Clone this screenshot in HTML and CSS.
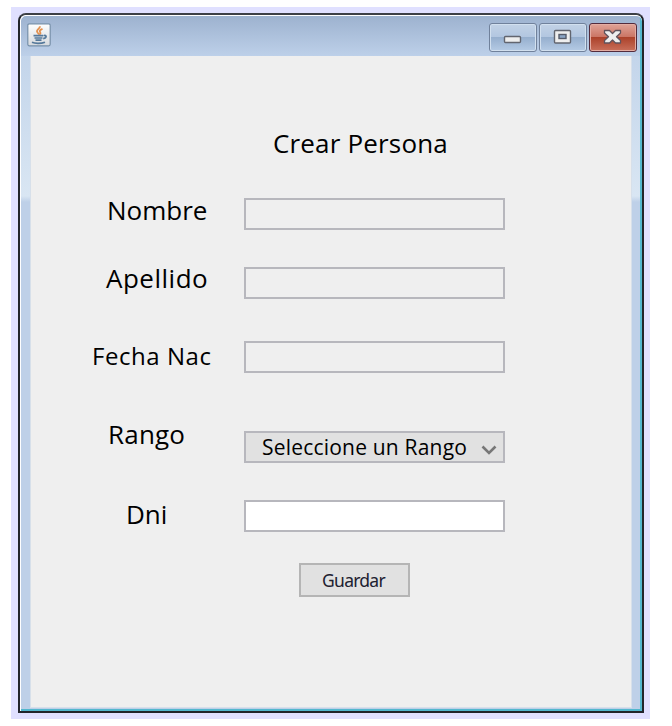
FILE: index.html
```
<!DOCTYPE html>
<html lang="es">
<head>
<meta charset="utf-8">
<title>Crear Persona</title>
<link rel="stylesheet" href="styles.css">
</head>
<body>
<div class="backdrop">
  <div class="window">
    <div class="frame">
      <header class="titlebar">
        <svg class="app-icon" width="24" height="24" viewBox="0 0 24 24">
          <defs>
            <linearGradient id="tile" x1="0" y1="0" x2="0" y2="1"><stop offset="0" stop-color="#fff"/><stop offset="1" stop-color="#d5d9dd"/></linearGradient>
          </defs>
          <rect x=".8" y=".8" width="22.4" height="22" rx="1.5" fill="url(#tile)" stroke="#7690aa" stroke-width="1.2"/>
          <path d="M12.8 3.2c.8 2.3-4.2 3.3-2.5 5.9.5 1 1.5 1.7 1.6 2.5M15.5 5.800c-2.8 1.2-3.3 2.2-2.2 3.5.6.8-.1 1.7-.8 2.3" fill="none" stroke="#e3914f" stroke-width="1.8"/>
          <path d="M6.500 12.700h9.500M7.500 15h8M8.500 17.200h6M16.500 12.700c3.500-1.300 3.500 2.200-.3 3M5 19.300c3 1.400 9 1.400 13-.1" fill="none" stroke="#55799b" stroke-width="1.7"/>
        </svg>
        <div class="controls">
          <span class="control">
            <svg width="48" height="29" viewBox="0 0 48 29"><rect x="15.500" y="13.500" width="16" height="6" rx="1" fill="#eee" stroke="#62656f" stroke-width="1.400"/></svg>
          </span>
          <span class="control">
            <svg width="48" height="29" viewBox="0 0 48 29"><rect x="15.500" y="7.500" width="16" height="12.500" rx="1" fill="#eee" stroke="#62656f" stroke-width="1.400"/><rect x="20" y="11.500" width="7" height="4" fill="#8ba5c5" stroke="#555b6a" stroke-width="1.400"/></svg>
          </span>
          <span class="control close">
            <svg width="48" height="29" viewBox="0 0 48 29"><path d="M15.500 7.500h5l3 3 3-3h5v2.500L27.500 13.700l4 3.800v2.500h-5l-3-3-3 3h-5v-2.500l4-3.800-4-3.700z" fill="#eee" stroke="#60535c" stroke-width="1.300" stroke-linejoin="round"/></svg>
          </span>
        </div>
      </header>
      <main class="content">
        <h1 class="title">Crear Persona</h1>
        <form class="form">
          <div class="row nombre"><label>Nombre</label><div class="field"></div></div>
          <div class="row apellido"><label>Apellido</label><div class="field"></div></div>
          <div class="row fecha"><label>Fecha Nac</label><div class="field"></div></div>
          <div class="row rango"><label>Rango</label>
            <div class="field select"><span>Seleccione un Rango</span>
              <svg width="16" height="12" viewBox="0 0 16 12"><path d="M1.500 2.500 8 9l6.500-6.500" fill="none" stroke="#777" stroke-width="2.600"/></svg>
            </div>
          </div>
          <div class="row dni"><label>Dni</label><div class="field active"></div></div>
          <button class="save" type="button">Guardar</button>
        </form>
      </main>
    </div>
  </div>
</div>
</body>
</html>
```

FILE: styles.css
```
* { box-sizing: border-box; }
body {
  margin: 0;
  padding: 7px 22px 7px 11px;
  background: #fff;
  color: #000;
  font-family: "Open Sans", sans-serif;
}
.backdrop {
  height: 712px;
  padding: 6px 6px 6px 7px;
  background: #e0e0ff;
}
.window {
  height: 700px;
  border: 2px solid #22252b;
  border-top-color: #3c3f45;
  border-radius: 8px 8px 0 0;
  background: #fff;
  overflow: hidden;
}
.frame {
  height: 696px;
  padding: 0 10px 3px 9px;
  border: solid #fff;
  border-width: 1px 0 0 1px;
  border-radius: 6px 6px 0 0;
  box-shadow: inset -2px -2px #52b7ce;
  background:
    linear-gradient(#9db2cf, #bdd0e9 40px, transparent 40px),
    linear-gradient(#bdd0e8, #d9e6f3 180px, #bed0e8 186px);
}
.titlebar {
  height: 40px;
  display: flex;
  justify-content: space-between;
  margin: 0 -5px 0 -3px;
}
.app-icon { margin-top: 7px; }
.controls {
  display: flex;
  gap: 2px;
  padding-top: 7px;
}
.control {
  width: 48px;
  height: 29px;
  border: 1px solid #70819b;
  border-radius: 3px;
  background: linear-gradient(#c2d2e6, #b2c6e0 48%, #96afce 50%, #b5cbe5);
  box-shadow: inset 0 0 0 1px #d2e0ef;
}
.control svg { display: block; margin: -1px; }
.close {
  border-color: #532b3c;
  background: linear-gradient(#dfa398, #cb7564 48%, #ac422b 50%, #c9705b);
  box-shadow: inset 0 0 0 1px #e4ada3;
}
.content {
  height: 652px;
  border: 1px solid #d7e0ea;
  border-top: 0;
  background: #efefef;
}
.title {
  margin: 0;
  padding: 71px 0 0 242px;
  font-size: 26px;
  font-weight: 400;
  line-height: 32px;
  letter-spacing: .17px;
  white-space: nowrap;
}
.form { padding-left: 1px; }
.row {
  display: grid;
  grid-template-columns: 212px 261px;
  align-items: start;
  height: 32px;
}
label {
  font-size: 26px;
  line-height: 24px;
  white-space: nowrap;
}
.field {
  height: 32px;
  border: 2px solid #b7b7bd;
}
.active { background: #fff; }
.nombre { margin-top: 39px; }
.nombre label { padding-left: 75px; }
.apellido { margin-top: 37px; }
.apellido label { padding-left: 74px; line-height: 22px; letter-spacing: .5px; }
.fecha { margin-top: 42px; }
.fecha label { padding-left: 60px; font-size: 24px; line-height: 29px; letter-spacing: .55px; }
.rango { margin-top: 58px; }
.rango label { padding-left: 76px; margin-top: -9px; letter-spacing: .2px; }
.dni { margin-top: 37px; }
.dni label { padding-left: 94px; line-height: 28px; }
.select {
  display: flex;
  align-items: center;
  justify-content: space-between;
  padding: 0 6px 0 16px;
  background: #e1e1e1;
  font-size: 21px;
  line-height: 28px;
  letter-spacing: .2px;
  white-space: nowrap;
}
.select svg { margin-top: 6px; }
.save {
  display: block;
  width: 111px;
  height: 34px;
  margin: 31px 0 0 267px;
  padding: 0 2px 1px 0;
  border: 2px solid #b5b5b5;
  background: #e1e1e1;
  color: #202030;
  font: 17.5px "Noto Sans", sans-serif;
  letter-spacing: -.75px;
}
```
